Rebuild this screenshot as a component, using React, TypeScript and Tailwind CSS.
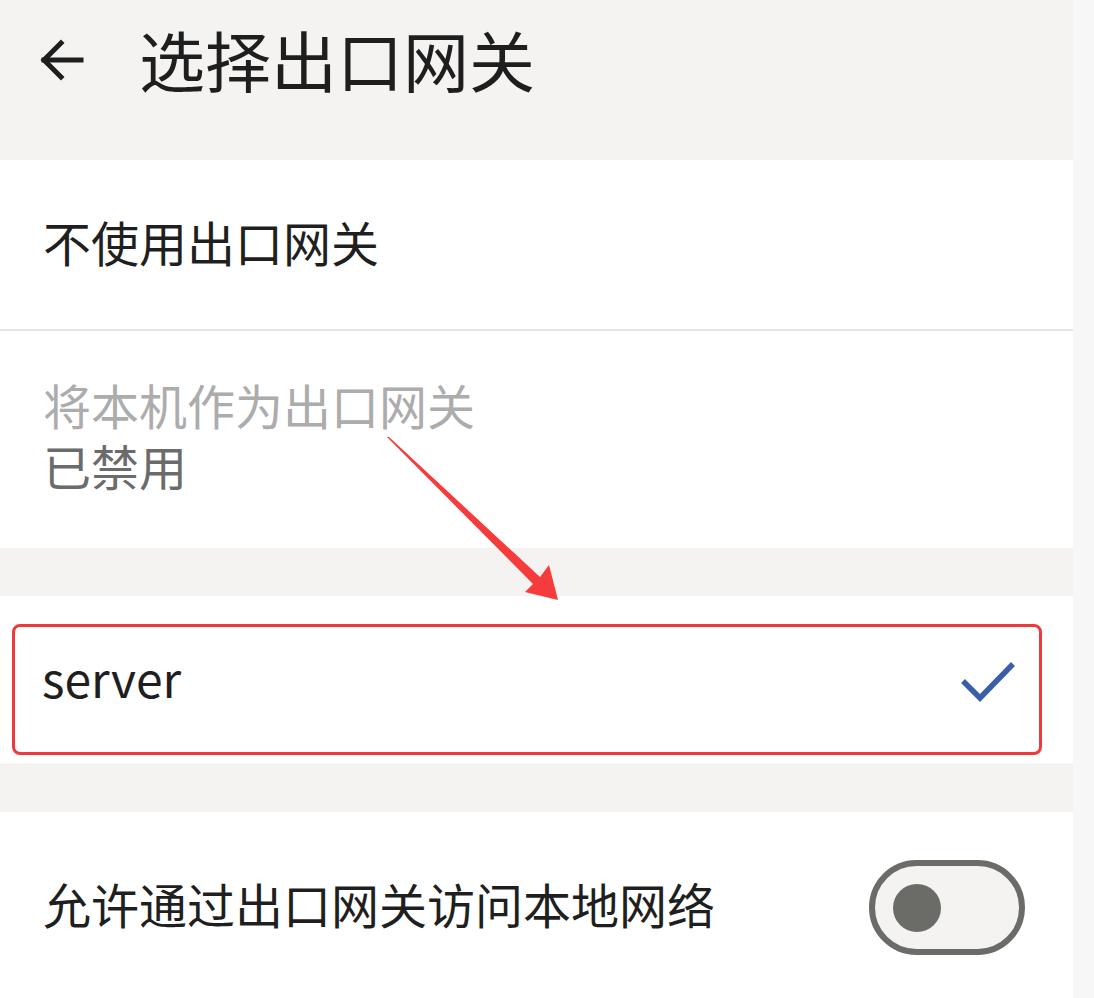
import React from "react";

const FONT = { fontFamily: '"Noto Sans CJK SC", "Noto Sans", sans-serif' };

const BackArrow = () => (
  <svg width="50" height="50" viewBox="0 0 50 50" fill="none" stroke="#1e1e1e" strokeWidth="5" strokeLinecap="square">
    <path d="M44 25H7" />
    <path d="M24 8L7 25l17 17" />
  </svg>
);

const Check = () => (
  <svg width="56" height="42" viewBox="0 0 56 42" fill="none" stroke="#3a5ea8" strokeWidth="5.5">
    <path d="M2 20l17 17L52 3" />
  </svg>
);

const Toggle = () => (
  <div className="w-[156px] h-[95px] rounded-full border-[6px] border-[#6b6b68] bg-[#f4f3f1] flex items-center pl-[18px]">
    <div className="w-[48px] h-[48px] rounded-full bg-[#6b6b68]" />
  </div>
);

export default function App() {
  return (
    <div className="relative w-[1094px] h-[998px] overflow-hidden bg-[#f7f7f7]" style={FONT}>
      <div className="w-[1073px] flex flex-col">
        {/* Header */}
        <div className="h-[160px] bg-[#f4f3f1] flex items-start pt-[25px] pl-[37px]">
          <div className="h-[70px] flex items-center">
            <BackArrow />
          </div>
          <div className="ml-[52px] h-[70px] leading-[70px] text-[66px] text-[#1e1e1e] -mt-[2px]">选择出口网关</div>
        </div>

        {/* No gateway */}
        <div className="h-[169px] bg-white flex items-center px-[43px] pb-[8px] text-[48px] text-[#1f1f1f]">
          不使用出口网关
        </div>
        <div className="h-[2px] bg-[#e6e6e6]" />

        {/* Use this device */}
        <div className="h-[217px] bg-white flex flex-col justify-center px-[43px] pb-[9px] text-[48px] leading-[61px]">
          <div className="text-[#acacac]">将本机作为出口网关</div>
          <div className="text-[#6b6b6b]">已禁用</div>
        </div>

        <div className="h-[48px] bg-[#f4f3f1]" />

        {/* server */}
        <div className="h-[167px] bg-white pt-[28px] pl-[12px] pr-[31px]">
          <div className="h-[131px] rounded-[8px] border-[3px] border-[#f03a3a] flex items-center justify-between pl-[27px] pr-[22px]">
            <span className="text-[48px] text-[#1f1f1f] -mt-[26px]">server</span>
            <div className="-mt-[16px]">
              <Check />
            </div>
          </div>
        </div>

        <div className="h-[49px] bg-[#f4f3f1]" />

        {/* Allow local network */}
        <div className="h-[186px] bg-white flex items-center justify-between pl-[43px] pr-[48px]">
          <span className="text-[48px] text-[#1f1f1f] -mt-[4px]">允许通过出口网关访问本地网络</span>
          <div className="mt-[5px]">
            <Toggle />
          </div>
        </div>
      </div>

      {/* annotation arrow */}
      <svg className="absolute left-0 top-0 pointer-events-none" width="1094" height="998">
        <polygon points="387,437 389,437 540,577 549,565 558,600 525,592 533,584" fill="#f53b3b" />
      </svg>
    </div>
  );
}
